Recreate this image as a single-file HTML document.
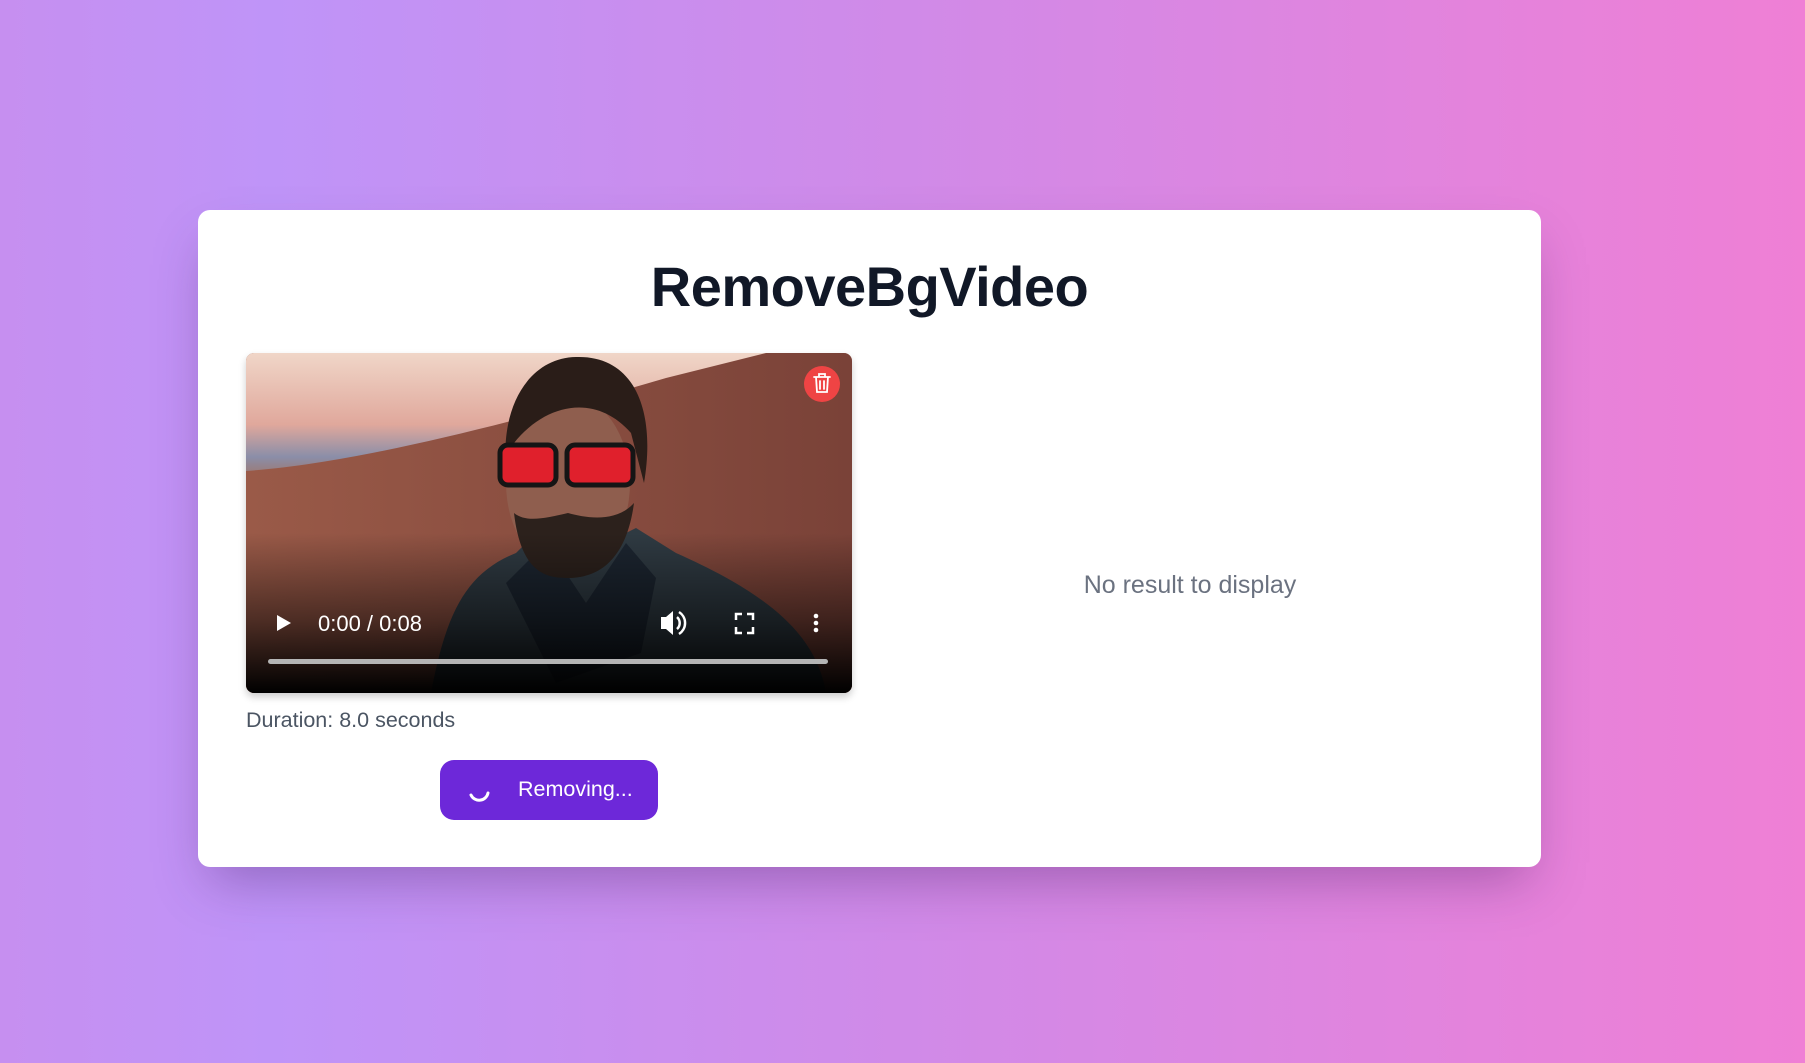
<!DOCTYPE html>
<html><head><meta charset="utf-8"><style>
html,body{margin:0;padding:0;width:1805px;height:1063px;overflow:hidden}
body{background:linear-gradient(90deg,#c68ff0 0%,#bf94f8 15%,#d08ae8 50%,#ef7fd5 100%);font-family:"Liberation Sans",sans-serif;position:relative}
.card{position:absolute;left:198px;top:210px;width:1343px;height:657px;background:#fff;border-radius:12px;box-shadow:0 25px 50px -12px rgba(60,20,90,.35)}
h1{position:absolute;left:198px;width:1343px;top:252px;margin:0;text-align:center;font-size:56px;font-weight:700;color:#111827;line-height:70px;letter-spacing:-0.5px}
.video{position:absolute;left:246px;top:353px;width:606px;height:340px;border-radius:8px;overflow:hidden;box-shadow:0 4px 8px rgba(0,0,0,.2)}
.dur{position:absolute;left:246px;top:708px;font-size:21.5px;color:#4b5563}
.btn{position:absolute;left:440px;top:760px;width:218px;height:60px;border-radius:14px;background:#6d28d9;color:#fff}
.btn span{position:absolute;left:78px;top:17px;font-size:21.5px}
.nores{position:absolute;left:990px;width:400px;text-align:center;top:571px;font-size:25px;color:#6b7280}
</style></head><body>
<div class="card"></div>
<h1>RemoveBgVideo</h1>
<div class="video">
<svg width="606" height="340" viewBox="0 0 606 340">
<defs>
<linearGradient id="sky" x1="0" y1="0" x2="0" y2="1"><stop offset="0" stop-color="#f0d6c8"/><stop offset=".55" stop-color="#e0a89c"/><stop offset=".8" stop-color="#8a8ea8"/><stop offset="1" stop-color="#a4705c"/></linearGradient>
<linearGradient id="dune" x1="0" y1="0" x2="1" y2="0"><stop offset="0" stop-color="#9a5a48"/><stop offset="1" stop-color="#7a4238"/></linearGradient>
<linearGradient id="dark" x1="0" y1="0" x2="0" y2="1"><stop offset="0" stop-color="#000" stop-opacity="0"/><stop offset=".55" stop-color="#000" stop-opacity=".5"/><stop offset="1" stop-color="#000" stop-opacity="1"/></linearGradient>
</defs>
<rect width="606" height="340" fill="#8a4c40"/>
<rect width="606" height="130" fill="url(#sky)"/>
<path d="M0 118 C120 110 300 60 420 25 L520 0 L606 0 L606 340 L0 340Z" fill="url(#dune)"/>
<path d="M185 340 C200 260 220 220 270 200 L300 170 L340 200 L390 175 L430 200 C520 240 570 280 580 340Z" fill="#2f3a42"/>
<path d="M260 230 L300 190 L340 250 L380 190 L410 225 L395 300 L310 330Z" fill="#1c2530"/>
<ellipse cx="322" cy="130" rx="62" ry="88" fill="#8f5e4e"/>
<path d="M262 130 C250 60 280 5 330 4 C390 2 410 60 398 130 L385 80 C350 40 300 50 268 90Z" fill="#2a1d18"/>
<path d="M268 160 C275 220 300 225 322 225 C350 225 380 210 388 150 C370 170 340 165 322 160 C300 165 280 170 268 160Z" fill="#2c211c"/>
<rect x="254" y="92" width="56" height="40" rx="8" fill="#e0202c" stroke="#151515" stroke-width="5"/>
<rect x="321" y="92" width="66" height="40" rx="8" fill="#e0202c" stroke="#151515" stroke-width="5"/>
<rect x="0" y="180" width="606" height="160" fill="url(#dark)"/>
<circle cx="576" cy="31" r="18" fill="#ef4444"/>
<g fill="none" stroke="#fff" stroke-width="1.8" stroke-linecap="round"><path d="M568 24h16M573 24v-3h6v3M570 24l1 15h10l1-15M574 28v8M578 28v8"/></g>
<path d="M31 262 L45 270 L31 278Z" fill="#fff"/>
<text x="72" y="278" font-family="Liberation Sans" font-size="22" fill="#fff">0:00 / 0:08</text>
<path d="M415 264h5l7-6v24l-7-6h-5Z" fill="#fff"/>
<path d="M431 264a8 8 0 0 1 0 12M433 259a13 13 0 0 1 0 22" fill="none" stroke="#fff" stroke-width="2.5"/>
<path d="M490 267v-6h6M501 261h6v6M507 274v6h-6M496 280h-6v-6" fill="none" stroke="#fff" stroke-width="2.5"/>
<circle cx="570" cy="263" r="2.3" fill="#fff"/><circle cx="570" cy="270" r="2.3" fill="#fff"/><circle cx="570" cy="277" r="2.3" fill="#fff"/>
<rect x="22" y="306" width="560" height="5" rx="2.5" fill="#b5b5b5"/>
</svg>
</div>
<div class="dur">Duration: 8.0 seconds</div>
<div class="btn"><svg style="position:absolute;left:26px;top:20px" width="28" height="28"><path d="M5 15 A9 9 0 0 0 22 13" fill="none" stroke="#fff" stroke-width="3" stroke-linecap="round"/></svg><span>Removing...</span></div>
<div class="nores">No result to display</div>
</body></html>
